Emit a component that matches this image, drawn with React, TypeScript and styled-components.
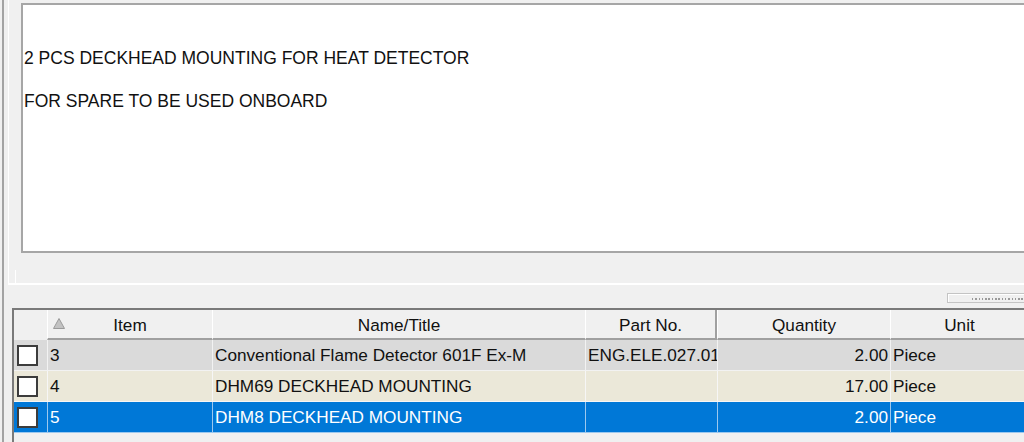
import React from "react";
import styled, { createGlobalStyle } from "styled-components";

const Global = createGlobalStyle`
  html, body { margin: 0; padding: 0; background: #f0f0f0; }
  body { font-family: "Liberation Sans", Arial, sans-serif; }
  #root { width: 1024px; height: 442px; overflow: hidden; }
`;

const Page = styled.div`
  width: 1024px;
  height: 442px;
  overflow: hidden;
  background: #f0f0f0;
  display: flex;
  padding-left: 2px;
  box-sizing: border-box;
  font-family: "Liberation Sans", Arial, sans-serif;
  color: #000;
`;

const Body = styled.div`
  flex: 1;
  min-width: 0;
  display: flex;
  flex-direction: column;
  border-left: 2px solid #a3a3a3;
  padding-left: 4px;
`;

const TopPanel = styled.div`
  display: flex;
  flex-direction: column;
  border-left: 1px solid #ffffff;
  border-bottom: 2px solid #ffffff;
  padding: 3px 0 0 12px;
  margin-right: -40px;
`;

const TextBox = styled.div`
  height: 250px;
  box-sizing: border-box;
  background: #ffffff;
  border: 2px solid #a6a6a6;
  border-right: none;
  padding: 43px 0 0 1px;
  font-size: 17.5px;
  line-height: 21.5px;
  white-space: nowrap;
`;

const TextLine = styled.div<{ $gap?: number }>`
  margin-top: ${(p) => p.$gap ?? 0}px;
  color: #111;
`;

const PanelFoot = styled.div`
  height: 30px;
  box-sizing: border-box;
  margin-left: -6px;
  padding-top: 17px;
`;

const Stub = styled.div`
  height: 13px;
  border-left: 1px solid #ffffff;
`;

const SplitterRow = styled.div`
  height: 23px;
  display: flex;
  justify-content: flex-end;
  padding-top: 8px;
  box-sizing: border-box;
  margin-right: -40px;
`;

const Grip = styled.div`
  width: 117px;
  height: 10px;
  box-sizing: border-box;
  border: 1px solid #c4c4c4;
  box-shadow: inset 1px 1px 0 #ffffff;
  display: flex;
  align-items: center;
  padding-left: 24px;
`;

const Dots = styled.div`
  flex: 1;
  height: 2px;
  margin-top: 2px;
  background: repeating-linear-gradient(
    to right,
    #9a9a9a 0 1.5px,
    transparent 1.5px 3.3px
  );
`;

const Grid = styled.div`
  flex: 1;
  margin-left: 4px;
  border-top: 2px solid #7a7a7a;
  border-left: 2px solid #7a7a7a;
  display: grid;
  grid-template-columns: 33px 165px 373px 132px 173px 138px;
  grid-auto-rows: min-content;
  align-content: start;
  font-size: 17.2px;
`;

const HeadBlank = styled.div`
  height: 30px;
  background: #f0f0f0;
`;

const HeadCell = styled.div<{ $edge?: boolean }>`
  position: relative;
  height: 30px;
  box-sizing: border-box;
  background: #f0f0f0;
  border-left: 1px solid #ffffff;
  border-bottom: 2px solid #a0a0a0;
  ${(p) => (p.$edge ? "border-right: 2px solid #a0a0a0;" : "")}
  display: flex;
  align-items: center;
  justify-content: center;
  padding-top: 2px;
  color: #111;
  white-space: nowrap;
`;

const SortArrow = styled.svg`
  position: absolute;
  left: 5px;
  top: 8px;
`;

const Cell = styled.div<{ $bg: string; $fg: string; $line: string; $first?: boolean; $right?: boolean }>`
  height: 31px;
  box-sizing: border-box;
  background: ${(p) => p.$bg};
  color: ${(p) => p.$fg};
  border-bottom: 1px solid ${(p) => p.$line};
  ${(p) => (p.$first ? "" : `border-left: 1px solid ${p.$line};`)}
  display: flex;
  align-items: center;
  justify-content: ${(p) => (p.$right ? "flex-end" : "flex-start")};
  padding: 0 ${(p) => (p.$right ? "2px" : "0")} 0 ${(p) => (p.$right ? "0" : "2px")};
  overflow: hidden;
  white-space: nowrap;
`;

const CheckCell = styled(Cell)`
  padding-left: 3px;
`;

const Check = styled.div`
  width: 21px;
  height: 21px;
  box-sizing: border-box;
  background: #ffffff;
  border: 2px solid #3c3c3c;
`;

type Row = { item: string; name: string; part: string; qty: string; unit: string; kind: "gray" | "beige" | "sel" };

const rows: Row[] = [
  { item: "3", name: "Conventional Flame Detector 601F Ex-M", part: "ENG.ELE.027.017", qty: "2.00", unit: "Piece", kind: "gray" },
  { item: "4", name: "DHM69 DECKHEAD MOUNTING", part: "", qty: "17.00", unit: "Piece", kind: "beige" },
  { item: "5", name: "DHM8 DECKHEAD MOUNTING", part: "", qty: "2.00", unit: "Piece", kind: "sel" },
];

const palette = {
  gray: { bg: "#dadada", fg: "#111111", line: "#f2f2f2" },
  beige: { bg: "#ebe8d9", fg: "#111111", line: "#f6f6f6" },
  sel: { bg: "#0078d7", fg: "#ffffff", line: "#9cc8ee" },
};

export default function App() {
  return (
    <>
      <Global />
      <Page>
        <Body>
          <TopPanel>
            <TextBox>
              <TextLine>2 PCS DECKHEAD MOUNTING FOR HEAT DETECTOR</TextLine>
              <TextLine $gap={21.5}>FOR SPARE TO BE USED ONBOARD</TextLine>
            </TextBox>
            <PanelFoot>
              <Stub />
            </PanelFoot>
          </TopPanel>
          <SplitterRow>
            <Grip>
              <Dots />
            </Grip>
          </SplitterRow>
          <Grid>
            <HeadBlank />
            <HeadCell>
              <SortArrow width="12" height="11" viewBox="0 0 12 11">
                <polygon points="6,0.5 11.5,10.5 0.5,10.5" fill="#c2c2c2" stroke="#9a9a9a" strokeWidth="1" />
              </SortArrow>
              Item
            </HeadCell>
            <HeadCell>Name/Title</HeadCell>
            <HeadCell $edge>Part No.</HeadCell>
            <HeadCell>Quantity</HeadCell>
            <HeadCell>Unit</HeadCell>
            {rows.map((r) => {
              const c = palette[r.kind];
              return (
                <React.Fragment key={r.item}>
                  <CheckCell $bg={c.bg} $fg={c.fg} $line={c.line} $first>
                    <Check />
                  </CheckCell>
                  <Cell $bg={c.bg} $fg={c.fg} $line={c.line}>{r.item}</Cell>
                  <Cell $bg={c.bg} $fg={c.fg} $line={c.line}>{r.name}</Cell>
                  <Cell $bg={c.bg} $fg={c.fg} $line={c.line}>{r.part}</Cell>
                  <Cell $bg={c.bg} $fg={c.fg} $line={c.line} $right>{r.qty}</Cell>
                  <Cell $bg={c.bg} $fg={c.fg} $line={c.line}>{r.unit}</Cell>
                </React.Fragment>
              );
            })}
          </Grid>
        </Body>
      </Page>
    </>
  );
}
